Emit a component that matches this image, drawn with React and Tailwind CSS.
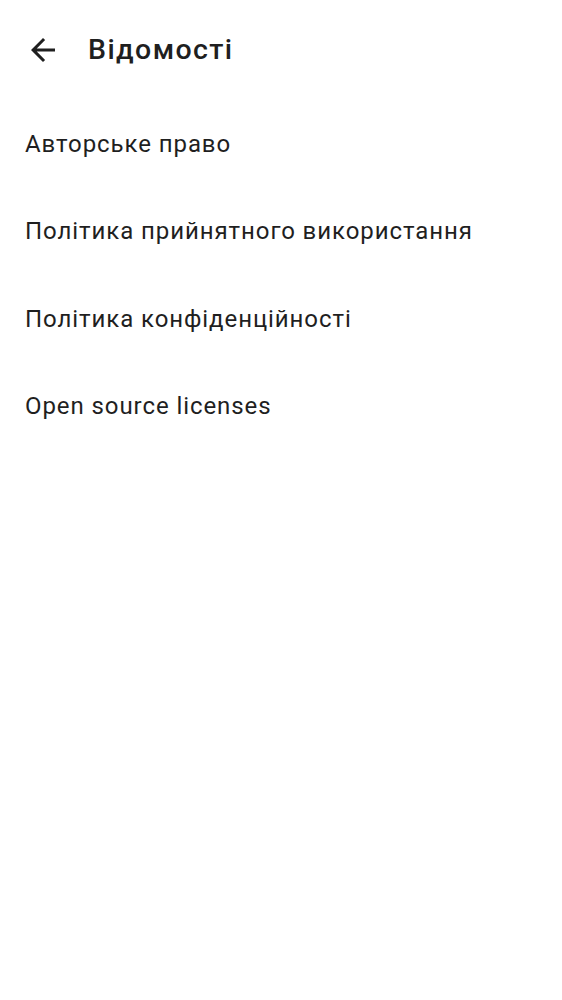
const items = [
  "Авторське право",
  "Політика прийнятного використання",
  "Політика конфіденційності",
  "Open source licenses",
];

const BackIcon = () => (
  <svg className="w-9 h-9" viewBox="0 0 24 24" fill="#1f1f1f">
    <path d="M20 11H7.83l5.59-5.59L12 4l-8 8 8 8 1.41-1.41L7.83 13H20v-2z" />
  </svg>
);

export default function App() {
  return (
    <div className="min-h-screen bg-white text-[#1f1f1f] font-['Roboto',sans-serif]">
      {/* Header */}
      <div className="flex items-center h-[100px] pl-[25px]">
        <BackIcon />
        <h1 className="ml-[27px] text-[28.5px] font-medium leading-none tracking-[1.4px]">Відомості</h1>
      </div>

      {/* List */}
      <div>
        {items.map((label) => (
          <div key={label} className="flex items-center h-[87.5px] px-[25px] text-[24px] tracking-[0.92px]">
            {label}
          </div>
        ))}
      </div>
    </div>
  );
}
